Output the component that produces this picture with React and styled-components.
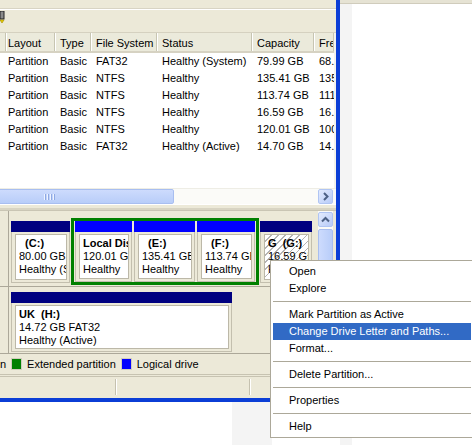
import React from "react";
import styled, { createGlobalStyle } from "styled-components";

const GlobalStyle = createGlobalStyle`
  html, body { margin: 0; padding: 0; background: #fff; }
  body {
    font-family: "Liberation Sans", Arial, sans-serif;
    font-size: 11px;
    color: #000;
  }
`;

const volumes = [
  { layout: "Partition", type: "Basic", fs: "FAT32", status: "Healthy (System)", cap: "79.99 GB", free: "68.25 GB" },
  { layout: "Partition", type: "Basic", fs: "NTFS", status: "Healthy", cap: "135.41 GB", free: "135.33 GB" },
  { layout: "Partition", type: "Basic", fs: "NTFS", status: "Healthy", cap: "113.74 GB", free: "111.85 GB" },
  { layout: "Partition", type: "Basic", fs: "NTFS", status: "Healthy", cap: "16.59 GB", free: "16.52 GB" },
  { layout: "Partition", type: "Basic", fs: "NTFS", status: "Healthy", cap: "120.01 GB", free: "100.87 GB" },
  { layout: "Partition", type: "Basic", fs: "FAT32", status: "Healthy (Active)", cap: "14.70 GB", free: "14.62 GB" },
];

const menuItems = [
  "Open",
  "Explore",
  "-",
  "Mark Partition as Active",
  "Change Drive Letter and Paths...",
  "Format...",
  "-",
  "Delete Partition...",
  "-",
  "Properties",
  "-",
  "Help",
];

const Screen = styled.div`
  position: relative;
  width: 472px;
  height: 445px;
  overflow: hidden;
  display: grid;
  grid-template-columns: 340px 1fr;
  grid-template-rows: 402px 1fr;
  background: #fff;
`;

const Window = styled.div`
  grid-column: 1;
  grid-row: 1;
  display: flex;
  flex-direction: column;
  background: #ece9d8;
  border-right: 4px solid #0b3ed6;
  border-bottom: 4px solid #0b3ed6;
  overflow: hidden;
`;

const MenuBar = styled.div`
  height: 9px;
  flex: none;
  border-bottom: 1px solid #fff;
  box-shadow: 0 -1px 0 #d8d4c4 inset;
`;

const Toolbar = styled.div`
  height: 21px;
  flex: none;
  display: flex;
  align-items: flex-start;
  padding-top: 1px;
  border-bottom: 1px solid #d5d1c0;
`;

const ListView = styled.div`
  height: 155px;
  flex: none;
  background: #fff;
  border-right: 2px solid #f3f2ec;
  overflow: hidden;
`;

const Grid = styled.div`
  display: grid;
  grid-template-columns: 3px 52px 36px 66px 95px 62px 1fr;
`;

const HeaderRow = styled(Grid)`
  height: 20px;
  background: #ebeadb;
  border-bottom: 2px solid #d6d2c2;
  box-sizing: border-box;
`;

const HeaderCell = styled.div`
  box-sizing: border-box;
  min-width: 0;
  padding: 2px 0 0 5px;
  line-height: 16px;
  white-space: nowrap;
  overflow: hidden;
  border-right: 1px solid #c7c5b2;
  box-shadow: 1px 0 0 #fff;
`;

const Row = styled(Grid)`
  height: 17px;
`;

const Cell = styled.div`
  box-sizing: border-box;
  min-width: 0;
  padding-left: 5px;
  line-height: 17px;
  white-space: nowrap;
  overflow: hidden;
`;

const HScroll = styled.div`
  height: 16px;
  flex: none;
  display: flex;
  align-items: center;
  background: #fbfbf8;
  border-top: 1px solid #eeede5;
  box-sizing: border-box;
  padding-right: 3px;
  overflow: hidden;
`;

const HTrack = styled.div`
  flex: 1;
  height: 100%;
  display: flex;
  align-items: center;
`;

const Thumb = styled.div`
  box-sizing: border-box;
  display: flex;
  align-items: center;
  justify-content: center;
  gap: 1px;
  border: 1px solid #a8bef0;
  border-radius: 2px;
  background: ${(p) =>
    p.$vertical
      ? "linear-gradient(to right, #cddbfd, #b8cdf9)"
      : "linear-gradient(to bottom, #cddbfd, #b8cdf9)"};
  ${(p) =>
    p.$vertical
      ? "width: 15px; height: 70px; margin-top: 2px;"
      : "height: 15px; width: 250px; margin-left: -76px;"}
`;

const Grip = styled.span`
  width: 1px;
  height: 6px;
  background: #eef3ff;
  box-shadow: 1px 0 0 #8fa9e3;
  margin-right: 1px;
`;

const ScrollButton = styled.div`
  width: 15px;
  height: 15px;
  flex: none;
  box-sizing: border-box;
  border: 1px solid #b0c5f3;
  border-radius: 2px;
  background: linear-gradient(135deg, #e3ebfe, #b7cbf8);
  display: flex;
  align-items: center;
  justify-content: center;
`;

const Splitter = styled.div`
  height: 7px;
  flex: none;
  border-top: 1px solid #fff;
  border-bottom: 1px solid #c9c5b4;
  box-sizing: border-box;
  box-shadow: 0 -2px 0 #d8d4c3 inset;
`;

const GraphView = styled.div`
  height: 143px;
  flex: none;
  display: flex;
  background: #ece9d8;
`;

const Disks = styled.div`
  flex: 1;
  display: flex;
  flex-direction: column;
`;

const DiskRow = styled.div`
  height: ${(p) => p.$h}px;
  padding-top: ${(p) => p.$top}px;
  display: flex;
  align-items: flex-start;
  border-bottom: 1px solid #aca899;
  box-sizing: border-box;
`;

const DiskLabel = styled.div`
  width: 8px;
  align-self: stretch;
  margin-top: ${(p) => -p.$top}px;
  border-right: 1px solid #aca899;
  background: #ece9d8;
`;

const Partitions = styled.div`
  display: flex;
  align-items: center;
  gap: 1px;
  padding-left: 2px;
`;

const Frame = styled.div`
  width: ${(p) => p.$w}px;
  height: ${(p) => (p.$h ? `${p.$h}px` : "auto")};
  align-self: ${(p) => (p.$h ? "auto" : "stretch")};
  box-sizing: border-box;
  display: flex;
  flex-direction: column;
  border: 1px solid #c3bfae;
  border-top: none;
  background: #ece9d8;
`;

const Bar = styled.div`
  height: 11px;
  flex: none;
  margin: 0 -1px;
  background: ${(p) => p.$color};
`;

const FrameBody = styled.div`
  flex: 1;
  display: flex;
  padding: 2px 2px 2px 3px;
`;

const Box = styled.div`
  flex: 1;
  min-width: 0;
  border: 1px solid #bcb8a8;
  padding: 2px 0 0 3px;
  line-height: 13px;
  white-space: pre;
  overflow: hidden;
  background: ${(p) =>
    p.$selected
      ? "repeating-linear-gradient(135deg, #fff 0 4px, #b4b4b4 4px 5px)"
      : "#fff"};
`;

const VolName = styled.div`
  font-weight: bold;
`;

const Extended = styled.div`
  width: 188px;
  height: 67px;
  box-sizing: border-box;
  border: 3px solid #008000;
  padding: 0 1px;
  display: flex;
  gap: 2px;
`;

const VScroll = styled.div`
  width: 15px;
  flex: none;
  margin-right: 3px;
  padding-top: 1px;
  display: flex;
  flex-direction: column;
  background: #fbfbf8;
`;

const Legend = styled.div`
  height: 20px;
  flex: none;
  display: flex;
  align-items: center;
  gap: 5px;
  margin-left: -90px;
  white-space: nowrap;
`;

const LegendItem = styled.div`
  display: flex;
  align-items: center;
  gap: 5px;
`;

const Swatch = styled.span`
  width: 11px;
  height: 12px;
  box-sizing: border-box;
  border: 1px solid #d0ccbc;
  background: ${(p) => p.$color};
`;

const StatusBar = styled.div`
  height: 20px;
  flex: none;
  display: flex;
  border-top: 3px double #c7c3b1;
`;

const StatusPanel = styled.div`
  width: ${(p) => (p.$w ? `${p.$w}px` : "auto")};
  flex: ${(p) => (p.$w ? "none" : "1")};
  border-right: 1px solid #c5c1af;
  box-shadow: 1px 0 0 #fff;
  margin: 2px 0;
`;

const RightPane = styled.div`
  grid-column: 2;
  grid-row: 1 / span 2;
  display: flex;
  flex-direction: column;
`;

const TopEdge = styled.div`
  height: 3px;
  background: #e6e3d4;
  border-bottom: 1px solid #d0ccbc;
`;

const RightBody = styled.div`
  flex: 1;
  display: flex;
`;

const Strip = styled.div`
  width: ${(p) => p.$w}px;
  flex: ${(p) => (p.$w ? "none" : "1")};
  background: ${(p) => p.$bg};
`;

const BottomPane = styled.div`
  grid-column: 1;
  grid-row: 2;
  display: flex;
`;

const Menu = styled.div`
  position: absolute;
  left: 270px;
  top: 260px;
  width: 204px;
  box-sizing: border-box;
  background: #fff;
  border: 1px solid #aca899;
  padding: 2px;
`;

const MenuItem = styled.div`
  height: 17px;
  line-height: 17px;
  padding-left: 16px;
  white-space: nowrap;
  background: ${(p) => (p.$active ? "#316ac5" : "transparent")};
  color: ${(p) => (p.$active ? "#fff" : "#000")};
`;

const MenuSeparator = styled.div`
  margin: 4px 0;
  border-top: 1px solid #aca899;
`;

const Chevron = ({ dir }) => (
  <svg width="9" height="9" viewBox="0 0 9 9">
    <path
      d={dir === "up" ? "M1 6.5 L4.5 3 L8 6.5" : "M3 1 L6.5 4.5 L3 8"}
      fill="none"
      stroke="#4d6185"
      strokeWidth="2"
    />
  </svg>
);

const ToolIcon = () => (
  <svg width="5" height="13" viewBox="0 0 5 13">
    <rect x="0" y="0" width="4" height="8" fill="#8a8a8a" stroke="#222" strokeWidth="1" />
    <path d="M0 9 L4 9 L2 12 Z" fill="#f2d600" stroke="#9a8400" strokeWidth="0.6" />
  </svg>
);

const Partition = ({ w, h, color, name, size, status, selected }) => (
  <Frame $w={w} $h={h}>
    <Bar $color={color} />
    <FrameBody>
      <Box $selected={selected}>
        <VolName>{name}</VolName>
        <div>{size}</div>
        <div>{status}</div>
      </Box>
    </FrameBody>
  </Frame>
);

const grips = [0, 1, 2, 3];

export default function App() {
  return (
    <>
      <GlobalStyle />
      <Screen>
        <Window>
          <MenuBar />
          <Toolbar>
            <ToolIcon />
          </Toolbar>
          <ListView>
            <HeaderRow>
              <HeaderCell>Volume</HeaderCell>
              <HeaderCell>Layout</HeaderCell>
              <HeaderCell>Type</HeaderCell>
              <HeaderCell>File System</HeaderCell>
              <HeaderCell>Status</HeaderCell>
              <HeaderCell>Capacity</HeaderCell>
              <HeaderCell>Free Space</HeaderCell>
            </HeaderRow>
            {volumes.map((v, i) => (
              <Row key={i}>
                <Cell />
                <Cell>{v.layout}</Cell>
                <Cell>{v.type}</Cell>
                <Cell>{v.fs}</Cell>
                <Cell>{v.status}</Cell>
                <Cell>{v.cap}</Cell>
                <Cell>{v.free}</Cell>
              </Row>
            ))}
          </ListView>
          <HScroll>
            <HTrack>
              <Thumb>
                {grips.map((g) => (
                  <Grip key={g} />
                ))}
              </Thumb>
            </HTrack>
            <ScrollButton>
              <Chevron dir="right" />
            </ScrollButton>
          </HScroll>
          <Splitter />
          <GraphView>
            <Disks>
              <DiskRow $h={76} $top={7}>
                <DiskLabel $top={7} />
                <Partitions>
                  <Partition w={59} h={62} color="#000080" name="  (C:)" size="80.00 GB" status="Healthy (System)" />
                  <Extended>
                    <Partition w={57} color="#0000ff" name="Local Disk  (D:)" size="120.01 GB NTFS" status="Healthy" />
                    <Partition w={61} color="#0000ff" name="  (E:)" size="135.41 GB NTFS" status="Healthy" />
                    <Partition w={58} color="#0000ff" name="  (F:)" size="113.74 GB NTFS" status="Healthy" />
                  </Extended>
                  <Partition w={52} h={62} color="#000080" name="G  (G:)" size="16.59 GB NTFS" status="Healthy" selected />
                </Partitions>
              </DiskRow>
              <DiskRow $h={67} $top={5}>
                <DiskLabel $top={5} />
                <Partitions>
                  <Partition w={221} h={60} color="#000080" name="UK  (H:)" size="14.72 GB FAT32" status="Healthy (Active)" />
                </Partitions>
              </DiskRow>
            </Disks>
            <VScroll>
              <ScrollButton>
                <Chevron dir="up" />
              </ScrollButton>
              <Thumb $vertical />
            </VScroll>
          </GraphView>
          <Legend>
            <LegendItem>
              <Swatch $color="#000080" />
              Primary partition
            </LegendItem>
            <LegendItem>
              <Swatch $color="#008000" />
              Extended partition
            </LegendItem>
            <LegendItem>
              <Swatch $color="#0000ff" />
              Logical drive
            </LegendItem>
          </Legend>
          <StatusBar>
            <StatusPanel $w={115} />
            <StatusPanel $w={133} />
            <StatusPanel />
          </StatusBar>
        </Window>
        <RightPane>
          <TopEdge />
          <RightBody>
            <Strip $w={12} $bg="#f4f4f4" />
            <Strip $bg="#fff" />
          </RightBody>
        </RightPane>
        <BottomPane>
          <Strip $w={232} $bg="#fff" />
          <Strip $w={40} $bg="#f4f4f4" />
          <Strip $bg="#fff" />
        </BottomPane>
        <Menu>
          {menuItems.map((item, i) =>
            item === "-" ? (
              <MenuSeparator key={i} />
            ) : (
              <MenuItem key={i} $active={item.startsWith("Change")}>
                {item}
              </MenuItem>
            )
          )}
        </Menu>
      </Screen>
    </>
  );
}
